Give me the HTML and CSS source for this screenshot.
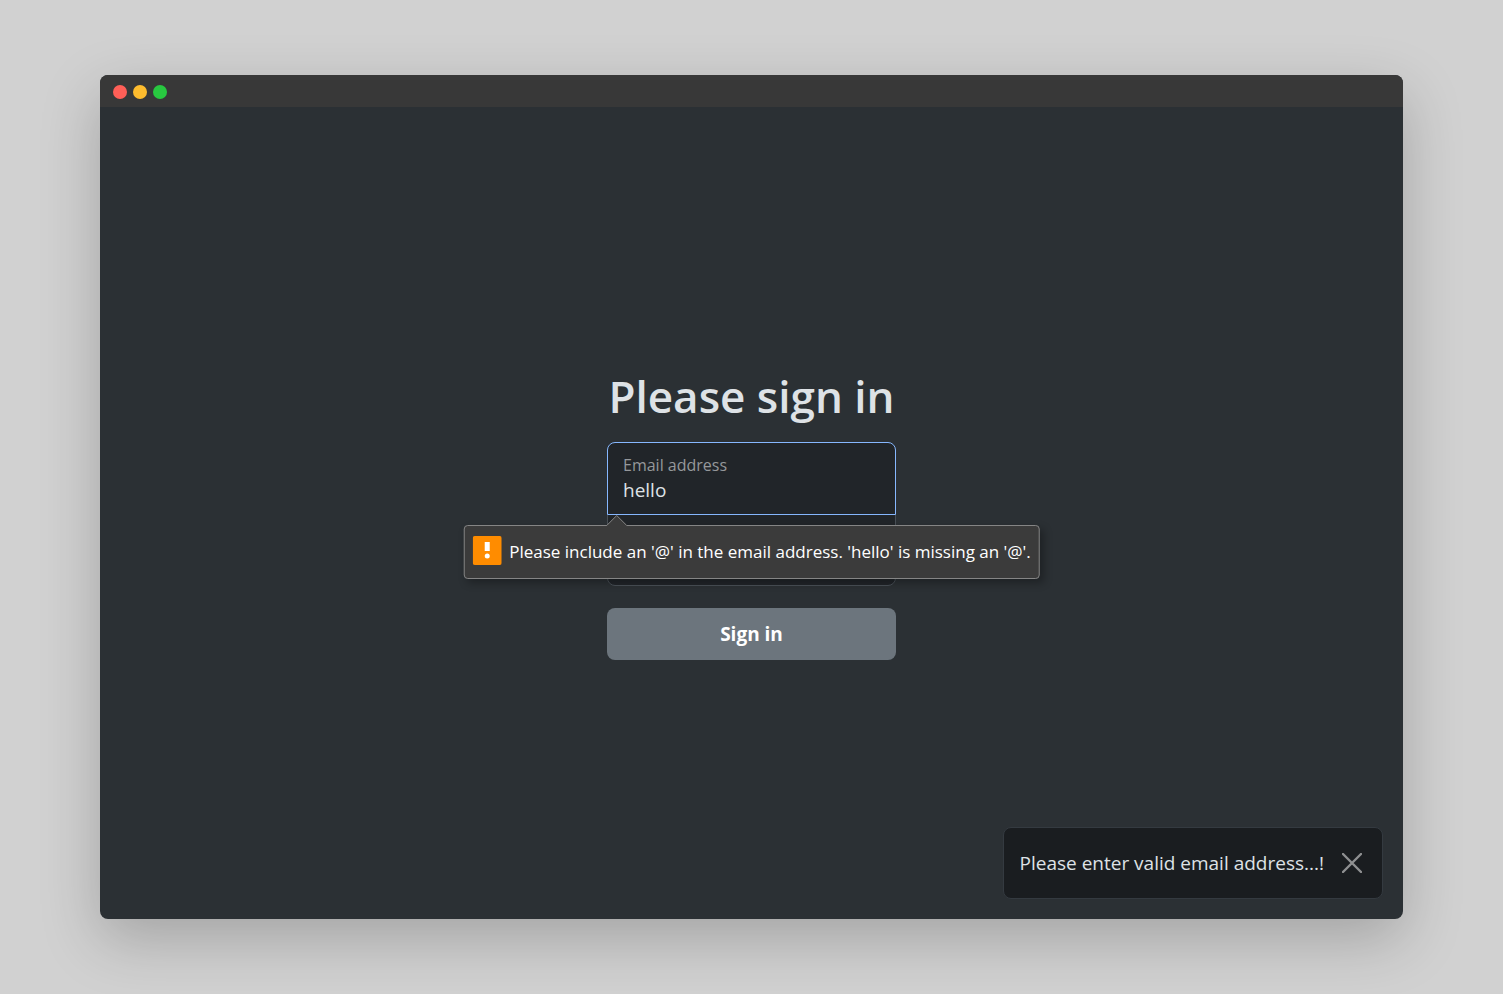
FILE: index.html
```html
<!DOCTYPE html>
<html lang="en">
<head>
<meta charset="utf-8">
<meta name="viewport" content="width=device-width, initial-scale=1">
<title>Sign in</title>
<link rel="stylesheet" href="styles.css">
</head>
<body>
<div class="window">
  <header class="titlebar">
    <span class="dot dot-close"></span>
    <span class="dot dot-minimize"></span>
    <span class="dot dot-zoom"></span>
  </header>
  <main class="content">
    <form class="signin" novalidate>
      <h1 class="heading">Please sign in</h1>
      <div class="field field-email">
        <label class="field-label" for="email">Email address</label>
        <input class="field-input" id="email" type="email" value="hello">
        <div class="hint" role="alert">
          <svg class="hint-arrow" width="20" height="11" viewBox="0 0 20 11" aria-hidden="true">
            <path d="M0 11V10L10 .5L20 10V11Z" fill="#3b3b3b"/>
            <path d="M0 10.5L10 .5L20 10.5" fill="none" stroke="#858585"/>
          </svg>
          <svg class="hint-icon" width="29" height="29" viewBox="0 0 29 29" aria-hidden="true">
            <rect width="29" height="29" rx="2" fill="#ff8c00"/>
            <rect x="12" y="6" width="5" height="9" fill="#fff"/>
            <circle cx="14.500" cy="20" r="2.500" fill="#fff"/>
          </svg>
          <span>Please include an '@' in the email address. 'hello' is missing an '@'.</span>
        </div>
      </div>
      <div class="field field-password">
        <input class="field-input" type="password" aria-label="Password">
      </div>
      <button class="submit" type="submit">Sign in</button>
    </form>
    <div class="toast" role="status">
      <span>Please enter valid email address...!</span>
      <button class="toast-close" type="button" aria-label="Close">
        <svg width="20" height="20" viewBox="0 0 20 20" aria-hidden="true">
          <path d="M1 1L19 19M19 1L1 19" stroke="#8f9091" stroke-width="2.400" stroke-linecap="round"/>
        </svg>
      </button>
    </div>
  </main>
</div>
</body>
</html>
```
FILE: styles.css
```css
* {
  box-sizing: border-box;
}

body {
  margin: 0;
  min-height: 100vh;
  padding: 75px 100px;
  display: flex;
  background: #d1d1d1;
  color: #dee2e6;
  font: 19px/28px "Segoe UI", "Open Sans", "Noto Sans", sans-serif;
}

.window {
  flex: 1;
  display: flex;
  flex-direction: column;
  border-radius: 8px;
  overflow: hidden;
  background: #2b3034;
  box-shadow: 0 20px 60px rgba(0, 0, 0, 0.22);
}

.titlebar {
  height: 32px;
  padding: 2px 13px 0;
  display: flex;
  align-items: center;
  gap: 6px;
  background: #383838;
}

.dot {
  width: 14px;
  height: 14px;
  border-radius: 50%;
}

.dot-close { background: #ff5f57; }
.dot-minimize { background: #febc2e; }
.dot-zoom { background: #28c840; }

.content {
  position: relative;
  flex: 1;
  display: flex;
  align-items: center;
  justify-content: center;
}

.signin {
  width: 289px;
  display: flex;
  flex-direction: column;
}

.heading {
  margin: 0 0 16px;
  font-size: 44px;
  font-weight: 600;
  line-height: 60px;
  text-align: center;
  white-space: nowrap;
}

.field {
  position: relative;
  display: flex;
}

.field-input {
  width: 100%;
  height: 73px;
  margin: 0;
  padding: 22px 15px 0;
  border: 1px solid #495057;
  outline: none;
  background: #212529;
  color: #dee2e6;
  font: inherit;
}

.field-email {
  z-index: 1;
}

.field-email .field-input {
  border-color: #86b7fe;
  border-radius: 8px 8px 0 0;
}

.field-password {
  margin: -2px 0 22px;
}

.field-password .field-input {
  border-radius: 0 0 8px 8px;
}

.field-label {
  position: absolute;
  top: 11px;
  left: 16px;
  font-size: 16px;
  line-height: 24px;
  color: #95989b;
}

.hint {
  position: absolute;
  top: 83px;
  left: 50%;
  transform: translateX(-50%);
  width: max-content;
  height: 54px;
  padding: 0 8px;
  display: flex;
  align-items: center;
  gap: 8px;
  border: 1px solid #858585;
  border-radius: 4px;
  background: #3b3b3b;
  color: #fff;
  font-size: 17px;
  box-shadow: 4px 4px 8px rgba(0, 0, 0, 0.3);
}

.hint-arrow {
  position: absolute;
  top: -11px;
  left: 142px;
}

.hint-icon {
  flex: none;
  margin-bottom: 3px;
}

.submit {
  height: 52px;
  padding: 0 16px;
  border: 0;
  border-radius: 8px;
  background: #6c757d;
  color: #fff;
  font: inherit;
  font-weight: 700;
}

.toast {
  position: absolute;
  right: 20px;
  bottom: 20px;
  height: 72px;
  padding: 0 20px 0 16px;
  display: flex;
  align-items: center;
  gap: 18px;
  border: 1px solid #343a40;
  border-radius: 8px;
  background: #1a1d20;
}

.toast-close {
  display: flex;
  padding: 0;
  border: 0;
  background: none;
}
```
